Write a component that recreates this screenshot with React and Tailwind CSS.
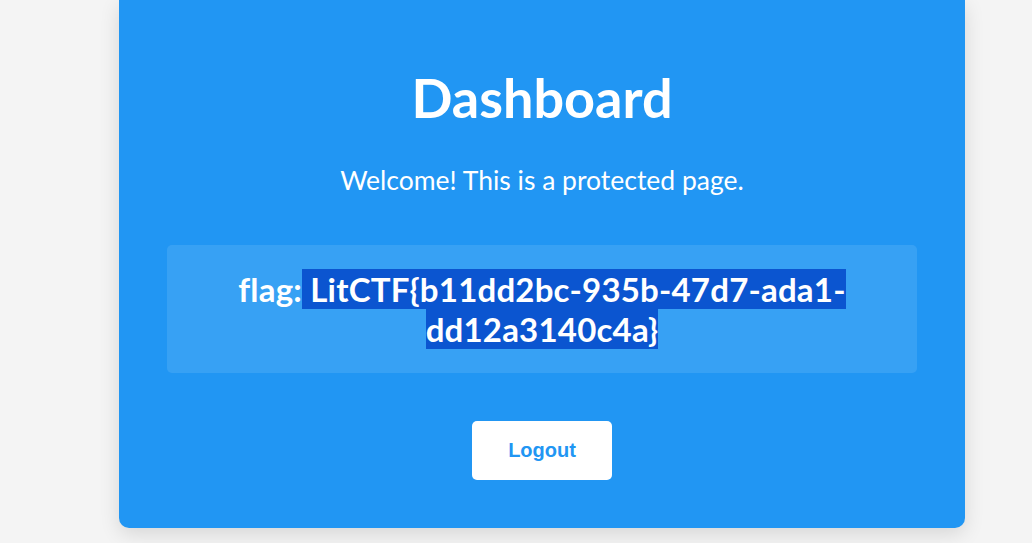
export default function App() {
  return (
    <div className="flex min-h-screen justify-center bg-[#f4f4f4] pl-[52px]">
      <div className="w-[846px] self-start rounded-b-[10px] bg-[#2196f3] px-12 pb-12 pt-[66px] text-center text-white shadow-[0_6px_20px_rgba(0,0,0,0.12)] [font-family:Lato,'Noto_Sans',sans-serif]">
        {/* Header */}
        <h1 className="text-[54px] font-bold leading-[1.2]">Dashboard</h1>
        <p className="mt-[34px] text-[26.5px] leading-[1.2]">Welcome! This is a protected page.</p>

        {/* Flag box */}
        <div className="mt-12 rounded-[5px] bg-white/10 px-6 py-6">
          <p className="text-[33px] font-bold leading-[40px] tracking-[0.2px]">
            flag:<span className="bg-[#0b55d0]"> LitCTF{'{'}b11dd2bc-935b-47d7-ada1-dd12a3140c4a{'}'}</span>
          </p>
        </div>

        <button className="mt-12 h-[59px] w-[140px] rounded-[5px] bg-white text-[20px] font-bold text-[#2196f3] [font-family:'Liberation_Sans',Arial,sans-serif]">
          Logout
        </button>
      </div>
    </div>
  )
}
